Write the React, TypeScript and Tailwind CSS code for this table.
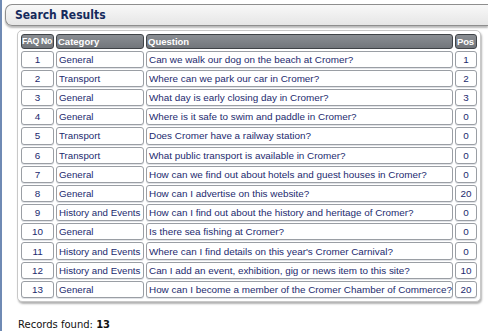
import React from "react";

const rows: [number, string, string, number][] = [
  [1, "General", "Can we walk our dog on the beach at Cromer?", 1],
  [2, "Transport", "Where can we park our car in Cromer?", 2],
  [3, "General", "What day is early closing day in Cromer?", 3],
  [4, "General", "Where is it safe to swim and paddle in Cromer?", 0],
  [5, "Transport", "Does Cromer have a railway station?", 0],
  [6, "Transport", "What public transport is available in Cromer?", 0],
  [7, "General", "How can we find out about hotels and guest houses in Cromer?", 0],
  [8, "General", "How can I advertise on this website?", 20],
  [9, "History and Events", "How can I find out about the history and heritage of Cromer?", 0],
  [10, "General", "Is there sea fishing at Cromer?", 0],
  [11, "History and Events", "Where can I find details on this year's Cromer Carnival?", 0],
  [12, "History and Events", "Can I add an event, exhibition, gig or news item to this site?", 10],
  [13, "General", "How can I become a member of the Cromer Chamber of Commerce?", 20],
];

const th =
  "h-[15px] p-0 text-left align-middle bg-[linear-gradient(#8a8e93,#72767b)] border border-[#3f4347] rounded-[3px] text-white font-bold leading-[13px] whitespace-nowrap overflow-hidden";
const td =
  "h-[17.2px] p-0 align-middle bg-white border border-[#9a9ea4] rounded-[3px] shadow-[0_1px_0_#e2e4e8] text-[#1c2a6e] leading-[15px] whitespace-nowrap";

export default function App() {
  return (
    <div className="flex w-[488px] h-[331px] bg-white overflow-hidden" style={{ fontFamily: '"Liberation Sans", Arial, sans-serif' }}>
      <div className="w-[2px] shrink-0 bg-[#6f8ab4]" />
      <div className="flex-1 flex flex-col">
        <div className="ml-[3px] mt-[4px] h-[22px] flex items-center pl-[9px] rounded-l-[7px] border-y border-l border-[#8e8e8e] bg-[linear-gradient(#f8f8f8,#e6e6e6)] shadow-[0_2px_2px_rgba(0,0,0,0.28)]">
          <span
            className="font-bold text-[12px] text-[#152a5c]"
            style={{ fontFamily: '"DejaVu Sans Condensed", "DejaVu Sans", sans-serif' }}
          >
            Search Results
          </span>
        </div>
        <div className="ml-[15px] mt-[4px] w-[464px] border border-[#c8c8c8] rounded-[5px] p-[1px] bg-white shadow-[1px_2px_2px_rgba(0,0,0,0.3)]">
          <table className="border-separate border-spacing-[2px] table-fixed w-[460px]">
            <thead>
              <tr>
                <th className={th + " w-[33px] pl-0 text-[8.7px] tracking-[-0.3px]"}>FAQ No</th>
                <th className={th + " w-[88px] pl-[1px] text-[9.5px]"}>Category</th>
                <th className={th + " w-[307px] pl-[1px] text-[9.5px]"}>Question</th>
                <th className={th + " w-[22px] pl-[1px] text-[9.5px] tracking-[-0.2px]"}>Pos</th>
              </tr>
            </thead>
            <tbody>
              {rows.map(([n, c, q, p]) => (
                <tr key={n}>
                  <td className={td + " text-center text-[9.9px]"}>{n}</td>
                  <td className={td + " pl-[2px] text-[9.7px]"}>{c}</td>
                  <td className={td + " pl-[2px] text-[9.9px]"}>{q}</td>
                  <td className={td + " text-center text-[9.9px]"}>{p}</td>
                </tr>
              ))}
            </tbody>
          </table>
        </div>
        <div
          className="ml-[16px] mt-[16px] text-[10px] leading-[13px] text-[#111]"
          style={{ fontFamily: '"DejaVu Sans", Verdana, sans-serif' }}
        >
          Records found: <b>13</b>
        </div>
      </div>
    </div>
  );
}
